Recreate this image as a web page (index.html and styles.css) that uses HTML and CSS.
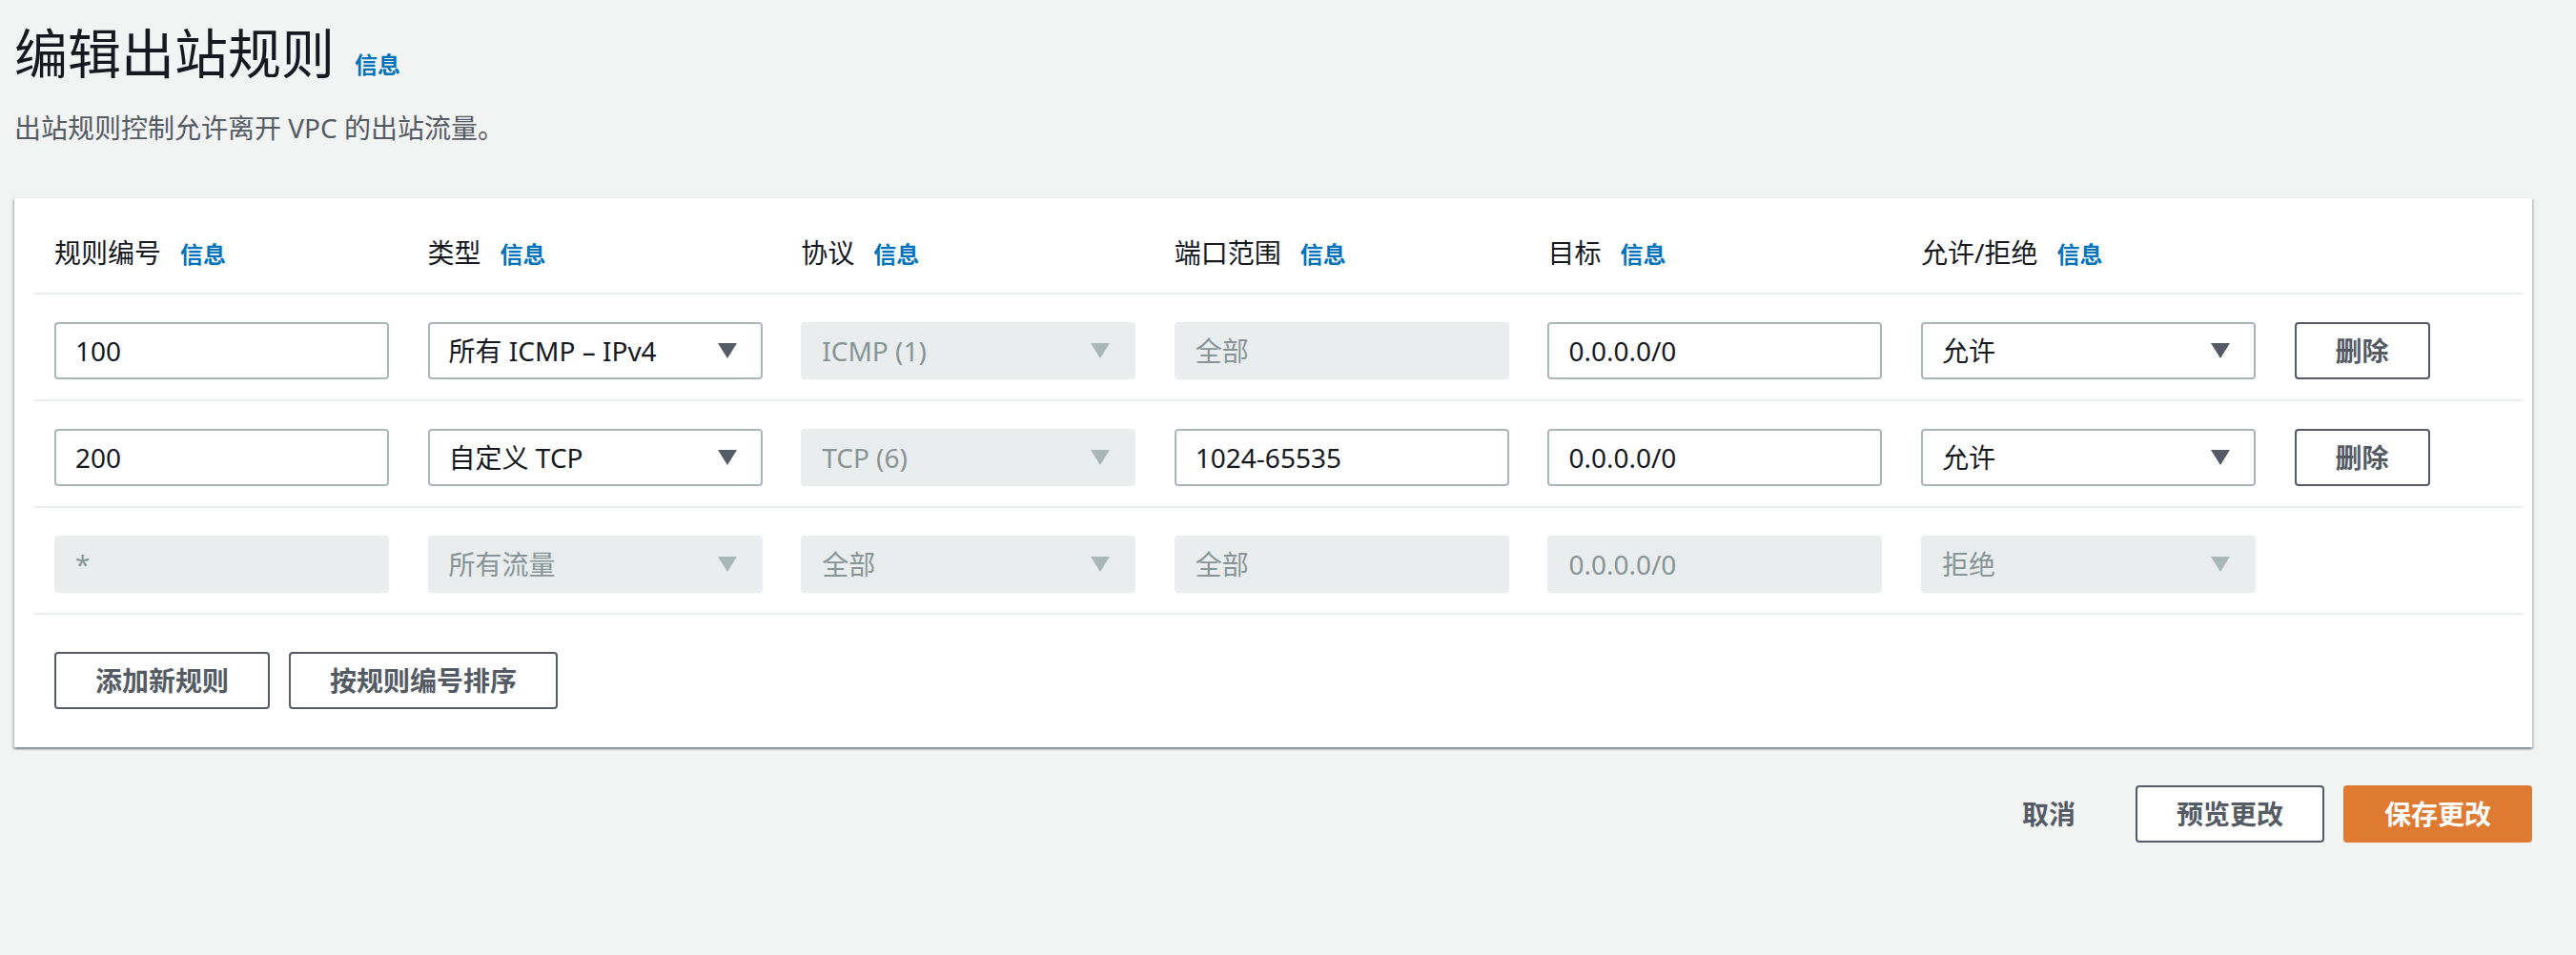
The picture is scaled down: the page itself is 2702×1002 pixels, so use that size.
FILE: index.html
```html
<!DOCTYPE html>
<html lang="zh-CN">
<head>
<meta charset="utf-8">
<title>编辑出站规则</title>
<link rel="stylesheet" href="styles.css">
</head>
<body>
<div class="page">
  <header class="page-head">
    <h1 class="title">编辑出站规则<a class="info info-title" href="#">信息</a></h1>
    <p class="desc">出站规则控制允许离开 VPC 的出站流量。</p>
  </header>

  <section class="card">
    <div class="table">
      <div class="row head">
        <div class="cell">规则编号<a class="info" href="#">信息</a></div>
        <div class="cell">类型<a class="info" href="#">信息</a></div>
        <div class="cell">协议<a class="info" href="#">信息</a></div>
        <div class="cell">端口范围<a class="info" href="#">信息</a></div>
        <div class="cell">目标<a class="info" href="#">信息</a></div>
        <div class="cell">允许/拒绝<a class="info" href="#">信息</a></div>
        <div class="cell"></div>
      </div>

      <div class="row">
        <div class="field">100</div>
        <div class="field select"><span>所有 ICMP – IPv4</span><svg class="caret" viewBox="0 0 20 16"><polygon points="0,0 20,0 10,16"/></svg></div>
        <div class="field select disabled"><span>ICMP (1)</span><svg class="caret" viewBox="0 0 20 16"><polygon points="0,0 20,0 10,16"/></svg></div>
        <div class="field disabled">全部</div>
        <div class="field">0.0.0.0/0</div>
        <div class="field select"><span>允许</span><svg class="caret" viewBox="0 0 20 16"><polygon points="0,0 20,0 10,16"/></svg></div>
        <div class="cell-btn"><button class="btn">删除</button></div>
      </div>

      <div class="row">
        <div class="field">200</div>
        <div class="field select"><span>自定义 TCP</span><svg class="caret" viewBox="0 0 20 16"><polygon points="0,0 20,0 10,16"/></svg></div>
        <div class="field select disabled"><span>TCP (6)</span><svg class="caret" viewBox="0 0 20 16"><polygon points="0,0 20,0 10,16"/></svg></div>
        <div class="field">1024-65535</div>
        <div class="field">0.0.0.0/0</div>
        <div class="field select"><span>允许</span><svg class="caret" viewBox="0 0 20 16"><polygon points="0,0 20,0 10,16"/></svg></div>
        <div class="cell-btn"><button class="btn">删除</button></div>
      </div>

      <div class="row">
        <div class="field disabled">*</div>
        <div class="field select disabled"><span>所有流量</span><svg class="caret" viewBox="0 0 20 16"><polygon points="0,0 20,0 10,16"/></svg></div>
        <div class="field select disabled"><span>全部</span><svg class="caret" viewBox="0 0 20 16"><polygon points="0,0 20,0 10,16"/></svg></div>
        <div class="field disabled">全部</div>
        <div class="field disabled">0.0.0.0/0</div>
        <div class="field select disabled"><span>拒绝</span><svg class="caret" viewBox="0 0 20 16"><polygon points="0,0 20,0 10,16"/></svg></div>
        <div class="cell-btn"></div>
      </div>
    </div>

    <div class="card-actions">
      <button class="btn">添加新规则</button>
      <button class="btn">按规则编号排序</button>
    </div>
  </section>

  <div class="footer">
    <button class="btn btn-link">取消</button>
    <button class="btn">预览更改</button>
    <button class="btn btn-primary">保存更改</button>
  </div>
</div>
</body>
</html>
```

FILE: styles.css
```css
* {
  box-sizing: border-box;
}

html, body {
  margin: 0;
  padding: 0;
  background: #f2f3f3;
}

body {
  font-family: "Noto Sans", "Noto Sans CJK SC", sans-serif;
  color: #16191f;
  font-size: 28px;
}

.page {
  width: 2641px;
  margin-left: 15px;
}

.page-head {
  padding-top: 23px;
}

.title {
  margin: 0;
  font-size: 56px;
  line-height: 64px;
  font-weight: 400;
  color: #16191f;
}

.info {
  color: #0073bb;
  font-size: 24px;
  line-height: 24px;
  font-weight: 700;
  text-decoration: none;
  margin-left: 20px;
}

.info-title {
  margin-left: 21px;
}

.desc {
  margin: 27px 0 0;
  font-size: 28px;
  line-height: 40px;
  color: #545b64;
}

.card {
  margin-top: 53px;
  background: #fff;
  padding: 0 9px 0 21px;
  box-shadow: 0 2px 2px 0 rgba(0, 28, 36, 0.3), 2px 2px 2px 0 rgba(0, 28, 36, 0.15), -2px 2px 2px 0 rgba(0, 28, 36, 0.15);
  border-top: 1px solid #eaeded;
}

.row {
  display: grid;
  grid-template-columns: repeat(6, 351px) 140px;
  column-gap: 40.6px;
  padding: 29px 21px 21px;
  border-bottom: 2px solid #eaeded;
  align-items: center;
}

.row.head {
  padding: 37px 21px 22px;
}

.cell {
  line-height: 40px;
  white-space: nowrap;
}

.field {
  height: 60px;
  border: 2px solid #aab7b8;
  border-radius: 4px;
  padding: 0 20px;
  line-height: 56px;
  color: #16191f;
  background: #fff;
  white-space: nowrap;
}

.field.select {
  display: flex;
  align-items: center;
  justify-content: space-between;
  padding-right: 25px;
}

.caret {
  width: 20px;
  height: 16px;
  fill: #545b64;
  flex: none;
}

.field.disabled {
  background: #eaeded;
  border-color: #eaeded;
  color: #879596;
}

.field.disabled .caret {
  fill: #aab7b8;
}

.cell-btn {
  display: flex;
}

.btn {
  font-family: "Noto Sans", "Noto Sans CJK SC", sans-serif;
  font-size: 28px;
  font-weight: 700;
  line-height: 56px;
  height: 60px;
  padding: 0 41px;
  border: 2px solid #545b64;
  border-radius: 4px;
  background: #fff;
  color: #545b64;
  white-space: nowrap;
}

.card-actions {
  display: flex;
  gap: 20px;
  padding: 39px 21px 40px;
}

.footer {
  display: flex;
  justify-content: flex-end;
  gap: 20px;
  margin-top: 40px;
}

.btn-link {
  border-color: transparent;
  background: transparent;
}

.btn-primary {
  background: #df7a32;
  border-color: #df7a32;
  color: #fff;
}
```
